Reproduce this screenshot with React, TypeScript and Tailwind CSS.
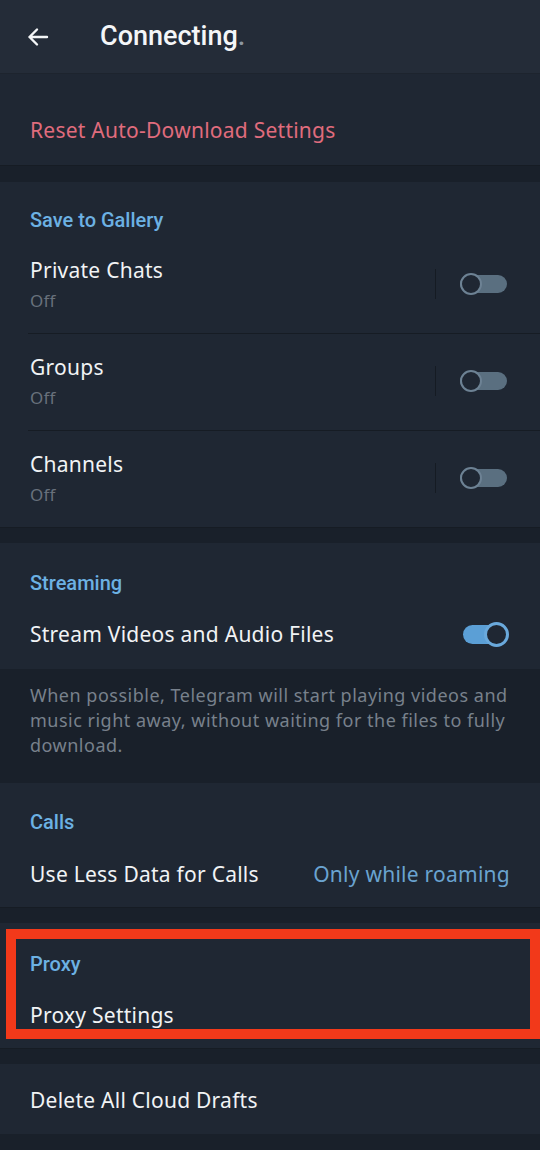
import React from "react";

const body = "font-['Noto_Sans',Roboto,sans-serif] tracking-[0.25px]";

function SectionHeader({ title, top = "pt-[27px]" }: { title: string; top?: string }) {
  return (
    <div className={`px-[30px] ${top}`}>
      <span className="block font-['Roboto',sans-serif] font-medium text-[20px] leading-[24px] text-[#6cb1e3]">
        {title}
      </span>
    </div>
  );
}

function OffToggle() {
  return (
    <div className="flex flex-row items-center">
      <div className="w-px h-[30px] bg-[#151b23] mr-[24px]" />
      <div className="relative w-[47px] h-[22px] flex items-center">
        <div className="w-full h-[18px] rounded-full bg-[#5a6f80]" />
        <div className="absolute left-0 top-0 w-[22px] h-[22px] rounded-full border-[2.5px] border-[#6d8294] bg-[#1f2733]" />
      </div>
    </div>
  );
}

function OnToggle() {
  return (
    <div className="relative w-[46px] h-[25px] flex items-center">
      <div className="w-[38px] h-[19px] rounded-full bg-[#5b9fd6]" />
      <div className="absolute right-0 top-0 w-[25px] h-[25px] rounded-full border-[3px] border-[#6aa9dc] bg-[#1f2733]" />
    </div>
  );
}

function GalleryRow({ title, divider }: { title: string; divider: boolean }) {
  return (
    <div>
      <div className="flex flex-row items-center justify-between pl-[30px] pr-[33px] pt-[19px] pb-[21px]">
        <div className="flex flex-col">
          <span className={`${body} text-[21px] leading-[28px] text-[#f1f3f5]`}>{title}</span>
          <span className={`${body} text-[17px] leading-[22px] mt-[6px] text-[#68717c]`}>Off</span>
        </div>
        <OffToggle />
      </div>
      {divider && <div className="ml-[28px] h-px bg-[#161c24]" />}
    </div>
  );
}

function Gap({ h = "h-[16px]" }: { h?: string }) {
  return <div className={`${h} bg-[#19202a] border-t border-[#161c24]`} />;
}

export default function App() {
  return (
    <div className="relative w-[540px] h-[1150px] bg-[#19202a] overflow-hidden">
      {/* top bar */}
      <div className="h-[74px] bg-[#242c38] border-b border-[#1d242e] flex flex-row items-center">
        <svg className="ml-[26px] w-[24px] h-[24px]" viewBox="0 0 24 24" fill="none" stroke="#f3f5f7" strokeWidth="2.4" strokeLinecap="round" strokeLinejoin="round">
          <path d="M21 12H3.5M11 4.5 3.5 12l7.5 7.5" />
        </svg>
        <span className="ml-[50px] font-['Roboto',sans-serif] font-medium text-[27px] text-[#f4f6f8]">
          Connecting<span className="text-[#8c96a1]">.</span>
        </span>
      </div>

      <div className="h-[91px] bg-[#1f2733] px-[30px] pt-[42px]">
        <span className={`${body} text-[21px] leading-[28px] text-[#e06c7d]`}>Reset Auto-Download Settings</span>
      </div>
      <Gap h="h-[17px]" />

      {/* save to gallery */}
      <div className="bg-[#1f2733]">
        <div className="pb-[5px]">
          <SectionHeader title="Save to Gallery" top="pt-[26px]" />
        </div>
        <GalleryRow title="Private Chats" divider />
        <GalleryRow title="Groups" divider />
        <GalleryRow title="Channels" divider={false} />
      </div>
      <Gap />

      {/* streaming */}
      <div className="bg-[#1f2733] h-[126px]">
        <SectionHeader title="Streaming" top="pt-[28px]" />
        <div className="flex flex-row items-center justify-between pl-[30px] pr-[31px] mt-[25px]">
          <span className={`${body} text-[21px] leading-[28px] text-[#f1f3f5]`}>Stream Videos and Audio Files</span>
          <OnToggle />
        </div>
      </div>
      <div className="h-[114px] bg-[#19202a] px-[30px] pt-[14px]">
        <p className="font-['Noto_Sans',Roboto,sans-serif] text-[18px] leading-[25px] tracking-[0.5px] text-[#78818c]">
          When possible, Telegram will start playing videos and music right away, without waiting for the files to fully download.
        </p>
      </div>

      {/* calls */}
      <div className="bg-[#1f2733] h-[124px]">
        <SectionHeader title="Calls" top="pt-[27px]" />
        <div className="flex flex-row items-center justify-between pl-[30px] pr-[30px] mt-[26px]">
          <span className={`${body} text-[21px] leading-[28px] text-[#f1f3f5]`}>Use Less Data for Calls</span>
          <span className={`${body} text-[21px] leading-[28px] text-[#6aa3d0]`}>Only while roaming</span>
        </div>
      </div>
      <Gap />

      {/* proxy */}
      <div className="bg-[#1f2733] h-[125px]">
        <SectionHeader title="Proxy" top="pt-[29px]" />
        <div className="pl-[30px] mt-[25px]">
          <span className={`${body} text-[21px] leading-[28px] text-[#f1f3f5]`}>Proxy Settings</span>
        </div>
      </div>
      <Gap />

      {/* drafts */}
      <div className="bg-[#1f2733] h-[70px] px-[30px] pt-[22px]">
        <span className={`${body} text-[21px] leading-[28px] text-[#f1f3f5]`}>Delete All Cloud Drafts</span>
      </div>

      {/* annotation box */}
      <div className="absolute left-[6px] top-[929px] w-[534px] h-[110px] border-[10px] border-[#f2391a]" />
    </div>
  );
}
